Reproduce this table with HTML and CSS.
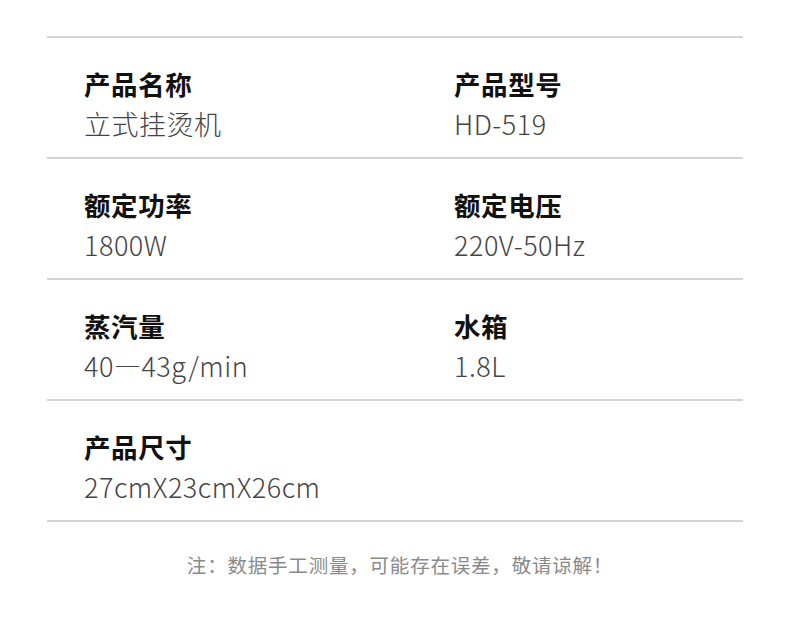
FILE: index.html
```html
<!DOCTYPE html>
<html lang="zh">
<head>
<meta charset="utf-8">
<link rel="stylesheet" href="styles.css">
</head>
<body>
<div class="page">
  <div class="spec">
    <div class="row">
      <div class="cell"><div class="label">产品名称</div><div class="value">立式挂烫机</div></div>
      <div class="cell"><div class="label">产品型号</div><div class="value">HD-519</div></div>
    </div>
    <div class="row">
      <div class="cell"><div class="label">额定功率</div><div class="value">1800W</div></div>
      <div class="cell"><div class="label">额定电压</div><div class="value">220V-50Hz</div></div>
    </div>
    <div class="row">
      <div class="cell"><div class="label">蒸汽量</div><div class="value">40—43g/min</div></div>
      <div class="cell"><div class="label">水箱</div><div class="value">1.8L</div></div>
    </div>
    <div class="row">
      <div class="cell"><div class="label">产品尺寸</div><div class="value">27cmX23cmX26cm</div></div>
    </div>
  </div>
  <p class="note">注：数据手工测量，可能存在误差，敬请谅解！</p>
</div>
</body>
</html>
```
FILE: styles.css
```css
html, body {
  margin: 0;
  padding: 0;
  background: #fff;
}
body {
  font-family: "Noto Sans CJK SC", "Noto Sans", sans-serif;
}
.page {
  padding: 36px 47px 0;
}
.spec {
  border-top: 2px solid #d4d4d4;
}
.row {
  display: grid;
  grid-template-columns: 370px 1fr;
  padding: 26px 0 12px 37px;
  border-bottom: 2px solid #d4d4d4;
  height: 81px;
}
.label {
  font-size: 26.5px;
  line-height: 40px;
  font-weight: 700;
  letter-spacing: 0.6px;
  color: #111;
}
.value {
  font-size: 27px;
  line-height: 40px;
  font-weight: 300;
  letter-spacing: 0.5px;
  color: #444;
}
.note {
  margin: 28px 0 0;
  padding-left: 10px;
  text-align: center;
  font-size: 19.5px;
  line-height: 30px;
  letter-spacing: 0.8px;
  color: #8a8a8a;
}
```
